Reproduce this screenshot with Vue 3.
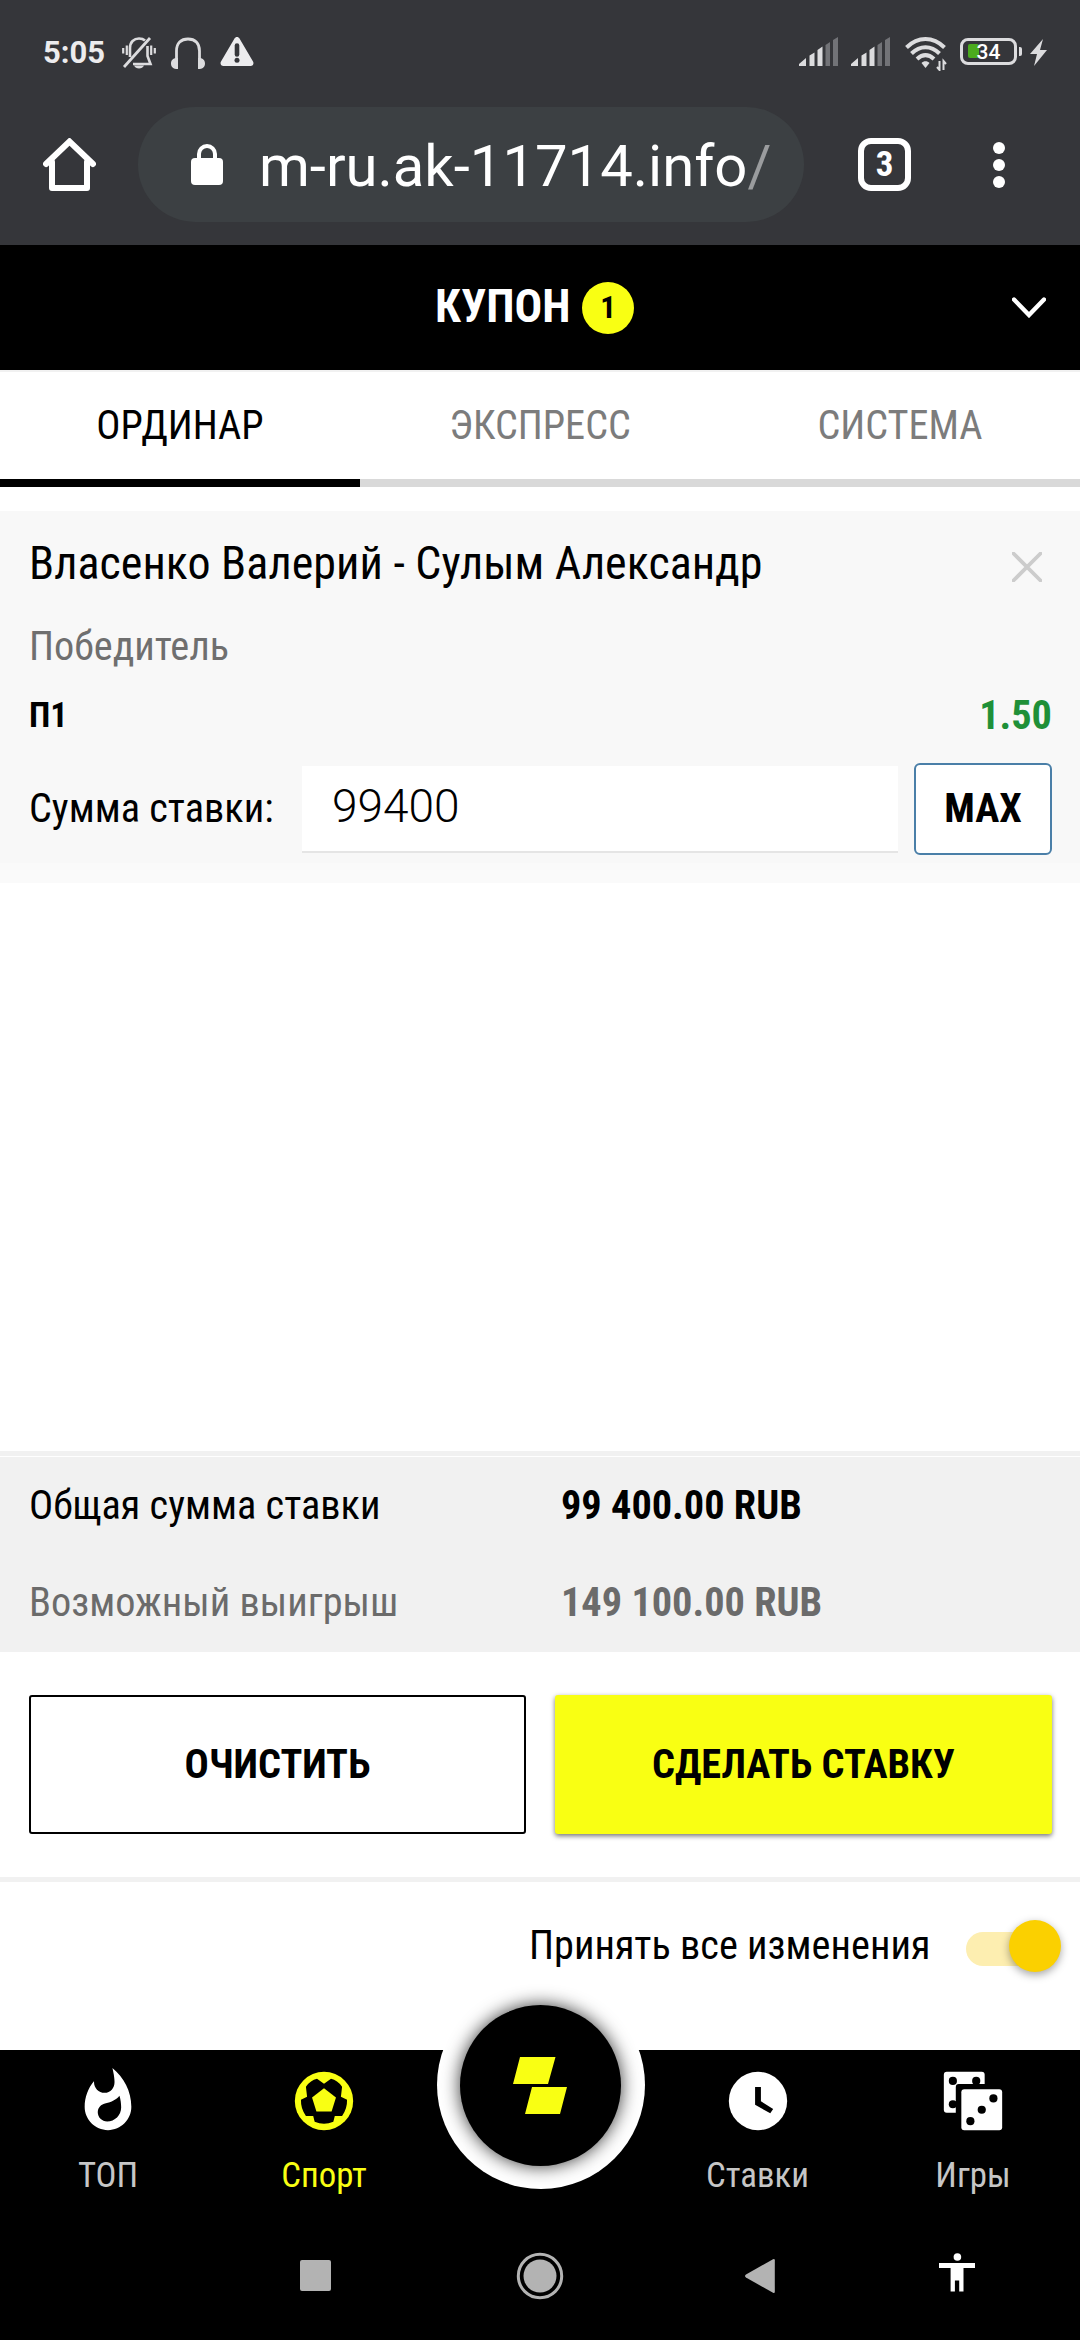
<script setup>
const tabs = [
  { label: 'ОРДИНАР', active: true },
  { label: 'ЭКСПРЕСС', active: false },
  { label: 'СИСТЕМА', active: false },
]
const totals = [
  { label: 'Общая сумма ставки', value: '99 400.00 RUB', muted: false },
  { label: 'Возможный выигрыш', value: '149 100.00 RUB', muted: true },
]
const signals = [1, 2]
</script>

<template>
  <div class="screen">
    <header class="chrome">
      <div class="status">
        <span class="time">5:05</span>
        <svg class="st-bell" viewBox="0 0 34 32" fill="none" stroke="#dcdcde" stroke-width="2.6">
          <path d="M8 20V11C8 5 12 1.500 17 1.500c2.500 0 4.500.6 6 2M25.500 9v10l3 8H11" />
          <path d="M28 1 2 30" stroke-width="2.800" />
          <path d="M1.200 11v5.500M4.800 8.500v9.500M29.200 8.500v9.500M32.800 11v5.500" stroke-width="2.200" />
          <path d="M12 28.500h10c-1.500 4-8.500 4-10 0z" fill="#dcdcde" stroke="none" />
        </svg>
        <svg class="st-head" viewBox="0 0 34 32">
          <path d="M5.500 23V14C5.500 6 10 2 17 2s11.500 4 11.500 12v9" fill="none" stroke="#dcdcde" stroke-width="2.800" />
          <path d="M7 21v11c-5 0-7-2-7-5.500S2 21 7 21zM27 21v11c5 0 7-2 7-5.500S32 21 27 21z" fill="#dcdcde" />
        </svg>
        <svg class="st-warn" viewBox="0 0 34 29">
          <path d="M14.500 1.500c1.200-2 3.800-2 5 0L33 24.500c1.200 2 0 4.500-2.500 4.500h-27C1 29 -.2 26.500 1 24.500z" fill="#ececee" />
          <path d="M17 8.500v9" stroke="#35363a" stroke-width="4.600" stroke-linecap="round" />
          <circle cx="17" cy="23.200" r="2.500" fill="#35363a" />
        </svg>
        <span class="grow"></span>
        <svg v-for="s in signals" :key="s" class="st-signal" viewBox="0 0 39 29">
          <path d="M0 29v-2l7-6v8zM10.500 29V18.500l5-3V29zM18.500 29V13l5-3.500V29z" fill="#dcdcde" />
          <path d="M26.500 29V8l4.500-3v24zM34 29V3l5-3v29z" fill="#727377" />
        </svg>
        <svg class="st-wifi" viewBox="0 0 42 34" fill="none" stroke="#dcdcde" stroke-width="4">
          <path d="M1.500 10.500C13-.8 28-.8 39.500 10.500" />
          <path d="M6.500 16.500C15 8 26 8 34.500 16.500" />
          <path d="M12 22c5.500-5 11.500-5 17 0" />
          <path d="M20.500 31l-4-5c2-2.300 6-2.300 8 0z" fill="#dcdcde" stroke="none" />
          <path d="M34.500 24v9l-2.500-3M38.500 33v-9l2.500 3" stroke-width="2" />
        </svg>
        <div class="battery"><div class="level"></div><span>34</span></div>
        <div class="battery-cap"></div>
        <svg class="st-bolt" viewBox="0 0 17 27"><path d="M13 0 0 15h7L4 27 17 11h-7z" fill="#dcdcde" /></svg>
      </div>
      <div class="toolbar">
        <svg class="home" viewBox="0 0 53 53" fill="none" stroke="#fff" stroke-width="6" stroke-linejoin="round" stroke-linecap="round">
          <path d="M3 26 26.500 3.500 50 26" stroke-linejoin="miter" />
          <path d="M9 24v26h35V24" />
        </svg>
        <div class="omnibox">
          <svg class="lock" viewBox="0 0 32 41">
            <path d="M8 17V10a8 8 0 0 1 16 0v7" fill="none" stroke="#fff" stroke-width="4" />
            <rect y="14" width="32" height="27" rx="4" fill="#fff" />
          </svg>
          <span class="url">m-ru.ak-11714.info<i>/</i></span>
        </div>
        <div class="tabcount"><span>3</span></div>
        <div class="dots"><b></b><b></b><b></b></div>
      </div>
    </header>

    <div class="coupon-head">
      <h1>КУПОН</h1>
      <span class="badge">1</span>
      <svg class="chevron" viewBox="0 0 34 21"><path d="M2 2.500 17 18 32 2.500" fill="none" stroke="#fff" stroke-width="4.400" stroke-linecap="round" /></svg>
    </div>

    <nav class="tabs">
      <div v-for="t in tabs" :key="t.label" class="tab" :class="{ active: t.active }">{{ t.label }}</div>
    </nav>

    <section class="bet">
      <div class="bet-title">
        <span>Власенко Валерий - Сулым Александр</span>
        <svg viewBox="0 0 30 30"><path d="M1.500 1.500l27 27M28.500 1.500l-27 27" stroke="#ccc" stroke-width="3.800" stroke-linecap="round" /></svg>
      </div>
      <div class="market">Победитель</div>
      <div class="outcome"><b class="pick">П1</b><b class="odds">1.50</b></div>
      <div class="stake">
        <label>Сумма ставки:</label>
        <div class="input">99400</div>
        <div class="max">MAX</div>
      </div>
    </section>

    <div class="spacer"></div>

    <section class="totals">
      <div v-for="t in totals" :key="t.label" class="total" :class="{ muted: t.muted }">
        <span>{{ t.label }}</span><b>{{ t.value }}</b>
      </div>
    </section>

    <div class="actions">
      <div class="btn clear">ОЧИСТИТЬ</div>
      <div class="btn place">СДЕЛАТЬ СТАВКУ</div>
    </div>

    <div class="accept">
      <span>Принять все изменения</span>
      <div class="switch"><i></i></div>
    </div>

    <footer class="nav">
      <div class="item">
        <svg viewBox="0 0 24 24"><path fill="#fff" d="M13.500.67s.74 2.650.74 4.800c0 2.060-1.350 3.730-3.410 3.730-2.070 0-3.630-1.670-3.630-3.730l.03-.36C5.210 7.510 4 10.620 4 14c0 4.420 3.580 8 8 8s8-3.580 8-8C20 8.610 17.410 3.800 13.500.67zM11.710 19c-1.780 0-3.220-1.400-3.220-3.140 0-1.620 1.050-2.760 2.810-3.120 1.770-.36 3.600-1.210 4.620-2.580.39 1.290.59 2.650.59 4.040 0 2.650-2.150 4.800-4.800 4.800z" /></svg>
        <span>ТОП</span>
      </div>
      <div class="item active">
        <svg viewBox="-12 -12 24 24">
          <circle r="10" fill="#f9ff13" />
          <path fill="#000" d="M0-5.900 2.400-7.600Q4.600-7.100 6.200-4.900L5.800-1.500 7.900-.4Q8 2.700 6.200 5.100H3.700L3.200 7.100Q0 8.500-3.200 7.100L-3.700 5.100H-6.200Q-8 2.700-7.900-.4L-5.800-1.500-6.200-4.900Q-4.600-7.100-2.400-7.600z" />
          <path fill="#f9ff13" d="M0-4.400 4.100-1.200 2.600 3.600H-2.600L-4.100-1.200z" />
        </svg>
        <span>Спорт</span>
      </div>
      <div class="item center">
        <div class="ring">
          <div class="disc">
            <svg viewBox="0 0 54 57" fill="#f9ff13"><path d="M7 0h35.500l-7.500 27H0zM19 30h35l-7 27H12z" /></svg>
          </div>
        </div>
      </div>
      <div class="item bets">
        <svg viewBox="0 0 24 24"><circle cx="12" cy="12" r="10" fill="#fff" /><path d="M11 7.200h2v4.900l4.200 2.600-1 1.500L11 13.300z" /></svg>
        <span>Ставки</span>
      </div>
      <div class="item games">
        <svg viewBox="0 0 24 24">
          <rect x="2" y="2" width="14" height="14" rx="1" fill="#fff" />
          <circle cx="5.100" cy="5.100" r="1.400" /><circle cx="13.100" cy="5.100" r="1.400" /><circle cx="5.100" cy="13.100" r="1.400" />
          <path d="M6.100 24V7.200q0-1 1-1H24V24z" />
          <rect x="8" y="8" width="14" height="14" rx="1" fill="#fff" />
          <circle cx="11.100" cy="18.900" r="1.400" /><circle cx="15" cy="15" r="1.400" /><circle cx="19" cy="11.100" r="1.400" />
        </svg>
        <span>Игры</span>
      </div>
    </footer>

    <div class="sysnav">
      <svg viewBox="0 0 1080 130">
        <rect x="300" y="40" width="31" height="31" rx="2" fill="#b3b3b3" />
        <circle cx="540" cy="56" r="21.700" fill="none" stroke="#b3b3b3" stroke-width="3" />
        <circle cx="540" cy="56" r="16.500" fill="#b3b3b3" />
        <path d="M746 54.500 773 39.300q1.800-.8 1.800 1V71.700q0 1.800-1.800 1L746 57.500q-2-1.500 0-3z" fill="#b3b3b3" />
        <g fill="#fff"><circle cx="957.400" cy="37" r="3.800" /><path d="M939 43h36v5h-11.500v23.500h-4.300V60.500h-4.300v11h-4.300V48H939z" /></g>
      </svg>
    </div>
  </div>
</template>

<style>
body { margin: 0; background: #fff; }
</style>

<style scoped>
.screen {
  width: 1080px; height: 2340px; display: flex; flex-direction: column; overflow: hidden;
  background: #fff; color: #000; font-family: "Roboto Condensed", Roboto, sans-serif; font-stretch: 75%;
  font-size: 40.3px; line-height: 50px; white-space: nowrap;
}
svg { display: block; flex: none; }
.chrome { height: 245px; flex: none; background: #35363a; font-family: Roboto, sans-serif; font-stretch: 100%; }
.status { height: 107px; display: flex; align-items: flex-start; padding: 0 33px 0 43px; box-sizing: border-box; }
.time { font-size: 31px; font-weight: 700; line-height: 36px; width: 79px; margin-top: 35px; color: #ececee; }
.grow { flex: 1; }
.st-bell, .st-head { width: 34px; height: 32px; margin: 37px 15px 0 0; }
.st-warn { width: 34px; height: 29px; margin-top: 37px; }
.st-signal { width: 39px; height: 29px; margin: 37px 13px 0 0; }
.st-wifi { width: 42px; height: 34px; margin: 37px 13px 0 2px; }
.battery { position: relative; width: 57px; height: 27px; margin-top: 38px; box-sizing: border-box; border: 3.5px solid #dcdcde; border-radius: 8px; display: flex; align-items: center; justify-content: center; }
.level { position: absolute; left: 5px; top: 3px; width: 11px; height: 14px; background: #4bab1e; border-radius: 2px; }
.battery span { position: relative; font-size: 21px; line-height: 20px; font-weight: 500; color: #fff; }
.battery-cap { width: 3px; height: 9px; margin: 47px 8px 0 2px; background: #dcdcde; border-radius: 0 2px 2px 0; }
.st-bolt { width: 17px; height: 27px; margin-top: 39px; }
.toolbar { display: flex; align-items: center; height: 115px; padding-left: 43px; }
.home { width: 53px; height: 53px; }
.omnibox { width: 666px; height: 115px; margin-left: 42px; border-radius: 58px; background: #3c4043; display: flex; align-items: center; flex: none; }
.lock { width: 32px; height: 41px; margin: 0 36px 0 53px; }
.url { font-size: 58px; line-height: 70px; color: #fff; padding-top: 2px; }
.url i { font-style: normal; color: #9a9c9e; }
.tabcount { width: 53px; height: 53px; box-sizing: border-box; border: 6px solid #fff; border-radius: 13px; margin-left: 54px; display: flex; align-items: center; justify-content: center; font-size: 35px; font-weight: 700; color: #fff; font-stretch: 75%; line-height: 40px; }
.dots { display: flex; flex-direction: column; gap: 5px; margin-left: 82px; }
.dots b { width: 12px; height: 12px; border-radius: 50%; background: #fff; }
.coupon-head { height: 125px; flex: none; background: #000; display: flex; align-items: center; padding-left: 435px; color: #fff; }
h1 { margin: -4px 0 0; font-size: 46px; line-height: 54px; font-weight: 700; width: 147px; }
.badge { width: 52px; height: 52px; border-radius: 50%; background: #f9ff13; color: #000; font-size: 31px; line-height: 52px; text-align: center; font-weight: 700; }
.chevron { width: 34px; height: 21px; margin-left: 378px; }
.tabs { height: 117px; flex: none; box-sizing: border-box; border-top: 2px solid #f1f1f1; display: flex; }
.tab { flex: 1; height: 115px; box-sizing: border-box; text-align: center; color: #7c7c7c; line-height: 108px; border-bottom: 8px solid #d9d9d9; }
.tab.active { color: #000; border-color: #000; }
.bet { height: 372px; flex: none; margin-top: 24px; box-sizing: border-box; background: #f8f8f8; border-bottom: 20px solid #fafafa; padding: 25px 28px 0 29px; }
.bet-title { height: 54px; display: flex; justify-content: space-between; align-items: center; font-size: 46px; line-height: 54px; }
.bet-title svg { width: 30px; height: 30px; margin: 8px 10px 0 0; }
.market { margin-top: 32px; color: #6f6f6f; }
.outcome { margin-top: 18px; height: 50px; display: flex; justify-content: space-between; }
.pick { font-size: 34.6px; }
.odds { color: #1f9038; line-height: 52px; }
.stake { margin-top: 23px; height: 92px; display: flex; align-items: center; }
.stake label { width: 273px; line-height: 82px; }
.input { width: 596px; height: 87px; box-sizing: border-box; border-bottom: 2px solid #e5e5e5; background: #fff; padding-left: 30px; font-size: 46px; line-height: 81px; font-weight: 300; font-family: Roboto, sans-serif; font-stretch: 100%; }
.max { width: 138px; height: 92px; margin-left: 16px; box-sizing: border-box; border: 2px solid #4a7fa8; border-radius: 6px; background: #fff; text-align: center; line-height: 87px; font-weight: 700; }
.spacer { flex: 1; }
.totals { height: 201px; flex: none; box-sizing: border-box; background: #f1f1f1; border-top: 5px solid #f1f1f1; display: flex; flex-direction: column; box-shadow: inset 0 1px #fff; }
.total { display: flex; height: 97px; line-height: 99px; padding-left: 29px; }
.total span { width: 532px; }
.muted { color: #6b6b6b; }
.actions { height: 225px; flex: none; display: flex; gap: 29px; padding: 43px 28px 0 29px; box-sizing: border-box; }
.btn { flex: 1; height: 139px; line-height: 135px; box-sizing: border-box; text-align: center; font-weight: 700; border: 2px solid #000; border-radius: 3px; }
.place { background: #f9ff13; border-color: #f9ff13; box-shadow: 0 2px 5px rgba(0, 0, 0, .55); }
.accept { height: 173px; flex: none; box-sizing: border-box; border-top: 5px solid #f1f1f1; display: flex; padding-left: 529px; line-height: 128px; }
.accept span { width: 437px; }
.switch { position: relative; width: 90px; height: 34px; border-radius: 17px; background: #fdeeb0; margin-top: 50px; }
.switch i { position: absolute; right: -5px; top: -12px; width: 52px; height: 52px; border-radius: 50%; background: #fbd000; box-shadow: 0 3px 8px rgba(0, 0, 0, .35); }
.nav { height: 160px; flex: none; background: #000; display: flex; color: #c6c6c6; font-size: 34.8px; }
.item { width: 216px; display: flex; flex-direction: column; align-items: center; padding-top: 16px; box-sizing: border-box; }
.item > svg { width: 70px; height: 70px; }
.item span { line-height: 40px; margin-top: 19px; }
.item.active { color: #f9ff13; }
.item.center { width: 217px; padding: 0; }
.item.bets { width: 217px; }
.item.games { width: 214px; }
.ring { width: 208px; height: 208px; margin-top: -69px; border-radius: 50%; background: #fff; display: flex; align-items: center; justify-content: center; flex: none; }
.disc { width: 161px; height: 161px; border-radius: 50%; background: #000; box-shadow: 0 0 18px rgba(0, 0, 0, .8); display: flex; align-items: center; justify-content: center; }
.disc svg { width: 54px; height: 57px; margin-right: 2px; }
.sysnav { height: 130px; flex: none; background: #000; }
.sysnav svg { width: 1080px; height: 130px; margin-top: 10px; }
</style>
